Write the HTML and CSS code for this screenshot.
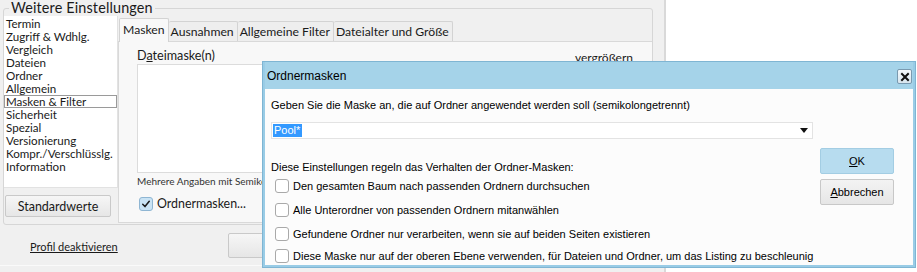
FILE: index.html
```html
<!DOCTYPE html>
<html lang="de">
<head>
<meta charset="utf-8">
<title>Ordnermasken</title>
<link rel="stylesheet" href="styles.css">
</head>
<body>
<div class="screen">
  <div class="window">
    <fieldset class="group">
      <legend class="group-title">Weitere Einstellungen</legend>
      <div class="group-body">
        <div class="side">
          <ul class="cat-list">
            <li>Termin</li>
            <li>Zugriff &amp; Wdhlg.</li>
            <li>Vergleich</li>
            <li>Dateien</li>
            <li>Ordner</li>
            <li>Allgemein</li>
            <li class="selected">Masken &amp; Filter</li>
            <li>Sicherheit</li>
            <li>Spezial</li>
            <li>Versionierung</li>
            <li>Kompr./Verschlüsslg.</li>
            <li>Information</li>
          </ul>
          <button class="btn btn-std" type="button">Standardwerte</button>
        </div>
        <div class="tabs">
          <div class="tab-strip">
            <span class="tab active">Masken</span>
            <span class="tab">Ausnahmen</span>
            <span class="tab">Allgemeine Filter</span>
            <span class="tab">Dateialter und Größe</span>
          </div>
          <div class="tab-pane">
            <div class="pane-head">
              <span>D<u>a</u>teimaske(n)</span>
              <span class="link-like">vergrößern</span>
            </div>
            <div class="textarea"></div>
            <div class="hint">Mehrere Angaben mit Semikolon trennen</div>
            <label class="check-main"><span class="cb checked"><svg viewBox="0 0 14 14" width="14" height="14"><path d="M3.2 7.3 L5.8 10 L10.8 3.8" fill="none" stroke="#1b1b1b" stroke-width="1.8" stroke-linecap="round" stroke-linejoin="round"/></svg></span>Ordnermasken...</label>
          </div>
        </div>
      </div>
    </fieldset>
    <div class="footer">
      <span class="footer-link">Profil deaktivieren</span>
      <button class="btn btn-footer" type="button">OK</button>
    </div>
  </div>
  <div class="desk"></div>

  <div class="dialog">
    <div class="dlg-title">
      <span>Ordnermasken</span>
      <span class="dlg-close"><svg viewBox="0 0 10 10" width="10" height="10"><path d="M2 2 L8 8 M8 2 L2 8" stroke="#111" stroke-width="2" stroke-linecap="square"/></svg></span>
    </div>
    <div class="dlg-body">
      <div class="prompt">Geben Sie die Maske an, die auf Ordner angewendet werden soll (semikolongetrennt)</div>
      <div class="combo">
        <span class="combo-sel">Pool*</span>
        <span class="combo-arrow"><svg viewBox="0 0 8 5" width="8" height="5"><path d="M0 0 H8 L4 5 Z" fill="#111"/></svg></span>
      </div>
      <div class="dlg-main">
        <div class="dlg-opts">
          <div class="opts-title">Diese Einstellungen regeln das Verhalten der Ordner-Masken:</div>
          <label class="opt"><span class="cb"></span>Den gesamten Baum nach passenden Ordnern durchsuchen</label>
          <label class="opt"><span class="cb"></span>Alle Unterordner von passenden Ordnern mitanwählen</label>
          <label class="opt"><span class="cb"></span>Gefundene Ordner nur verarbeiten, wenn sie auf beiden Seiten existieren</label>
          <label class="opt last"><span class="cb"></span>Diese Maske nur auf der oberen Ebene verwenden, für Dateien und Ordner, um das Listing zu beschleunig</label>
        </div>
        <div class="dlg-buttons">
          <button class="dbtn dbtn-ok" type="button"><u>O</u>K</button>
          <button class="dbtn" type="button"><u>A</u>bbrechen</button>
        </div>
      </div>
    </div>
  </div>
</div>
</body>
</html>
```

FILE: styles.css
```css
* { box-sizing: border-box; }
html, body { margin: 0; padding: 0; }
body {
  width: 917px;
  height: 272px;
  overflow: hidden;
  background: #ffffff;
  font-family: "Lato", "Noto Sans", sans-serif;
  color: #1a1a1a;
}
.screen {
  position: relative;
  display: flex;
  width: 917px;
  height: 272px;
}
.window {
  width: 666px;
  height: 272px;
  background: #f0f0f0;
  border-right: 2px solid #d9d9d9;
  display: flex;
  flex-direction: column;
}
.desk { flex: 1; background: #fff; }

/* group box */
.group {
  margin: 0 0 0 3px;
  padding: 0;
  width: 650px;
  height: 225px;
  min-width: 0;
  border: 1px solid #d6d6d6;
  border-radius: 3px;
}
.group-title {
  font-size: 14.4px;
  line-height: 16px;
  padding: 0 2px;
  margin-left: 5px;
  color: #1a1a1a;
  letter-spacing: 0.15px;
}
.group-body {
  display: flex;
  height: 208px;
}
.side {
  width: 114px;
  display: flex;
  flex-direction: column;
}
.cat-list {
  list-style: none;
  margin: 0;
  padding: 1px 0 0 0;
  height: 172px;
  background: #fff;
  border-right: 1px solid #e2e2e2;
  border-bottom: 1px solid #e2e2e2;
  font-size: 11.6px;
}
.cat-list li {
  height: 13px;
  line-height: 13px;
  padding-left: 2px;
  white-space: nowrap;
}
.cat-list li.selected {
  border: 1px solid #9a9a9a;
  padding-left: 1px;
  line-height: 11px;
}
.btn {
  font-family: "Lato", "Noto Sans", sans-serif;
  font-size: 12.5px;
  color: #1a1a1a;
  background: linear-gradient(#f6f6f6, #e6e6e6);
  border: 1px solid #c9c9c9;
  border-radius: 2px;
  padding: 0;
}
.btn-std {
  margin: 7px 0 0 1px;
  width: 106px;
  height: 22px;
}

/* tabs */
.tabs {
  flex: 1;
  display: flex;
  flex-direction: column;
  padding-top: 2px;
}
.tab-strip {
  display: flex;
  align-items: flex-end;
  height: 23px;
  padding-left: 1px;
  position: relative;
  z-index: 1;
}
.tab {
  font-size: 12.2px;
  height: 20px;
  line-height: 19px;
  padding: 0 3px 0 2px;
  border: 1px solid #d3d3d3;
  border-bottom: none;
  border-left: none;
  border-radius: 2px 2px 0 0;
  background: #eeeeee;
  white-space: nowrap;
}
.tab.active {
  height: 24px;
  margin-bottom: -1px;
  background: #f8f8f8;
  border-left: 1px solid #d3d3d3;
  line-height: 22px;
  padding: 0 3px 0 3px;
}
.tab-pane {
  flex: 1;
  margin-bottom: 1px;
  background: #f8f8f8;
  border: 1px solid #d9d9d9;
  border-right: none;
  padding: 6px 19px 0 18px;
  display: flex;
  flex-direction: column;
}
.pane-head {
  display: flex;
  justify-content: space-between;
  font-size: 12.6px;
  line-height: 16px;
  height: 16px;
}
.link-like { font-size: 12px; margin-top: 2px; }
.textarea {
  height: 109px;
  background: #fff;
  border: 1px solid #dcdcdc;
}
.hint {
  margin-top: 2px;
  font-size: 10px;
  line-height: 13px;
  color: #333;
  white-space: nowrap;
}
.check-main {
  display: flex;
  align-items: center;
  margin-top: 8px;
  margin-left: 2px;
  font-size: 12.4px;
  color: #1a1a1a;
}
.cb {
  display: inline-flex;
  align-items: center;
  justify-content: center;
  width: 14px;
  height: 14px;
  border: 1px solid #a9a9a9;
  border-radius: 3px;
  background: #fff;
  flex: none;
}
.check-main .cb {
  width: 14px;
  height: 14px;
  margin-right: 4px;
  border-color: #8fb6d3;
  background: #c9e3f4;
}

/* footer */
.footer {
  flex: 1;
  display: flex;
  align-items: flex-start;
  padding-top: 8px;
  border-bottom: 1px solid #fafafa;
  margin-bottom: 6px;
}
.footer-link {
  width: 87px;
  margin: 7px 0 0 30px;
  font-size: 11px;
  text-decoration: underline;
  color: #1a1a1a;
  white-space: nowrap;
}
.btn-footer {
  margin-left: 111px;
  width: 90px;
  height: 25px;
}

/* dialog */
.dialog {
  position: absolute;
  left: 262px;
  top: 61px;
  width: 654px;
  height: 207px;
  background: #99cce6;
  border: 1px solid #7fb5d3;
  padding: 0 2px 2px 2px;
  display: flex;
  flex-direction: column;
  font-family: "Liberation Sans", "Arial", sans-serif;
  font-size: 11px;
  color: #000;
}
.dlg-title {
  flex: none;
  height: 27px;
  display: flex;
  align-items: center;
  justify-content: space-between;
  padding: 0 1px 0 2px;
  font-size: 12px;
  background: #a5d3e9;
}
.dlg-close {
  width: 15px;
  height: 15px;
  display: flex;
  align-items: center;
  justify-content: center;
  border: 1px solid #7a9ab0;
  border-radius: 2px;
  background: linear-gradient(#f4f8fb, #d8e6ef);
  margin-top: 2px;
}
.dlg-body {
  flex: 1;
  min-height: 0;
  background: #fcfcfc;
  padding: 10px 19px 0 6px;
  display: flex;
  flex-direction: column;
}
.prompt { flex: none; height: 13px; line-height: 13px; }
.combo {
  flex: none;
  margin-top: 10px;
  width: 542px;
  height: 17px;
  border: 1px solid #e3e3e3;
  background: #fff;
  display: flex;
  align-items: center;
  justify-content: space-between;
  padding: 0 4px 0 1px;
}
.combo-sel {
  background: #3399ff;
  color: #fff;
  line-height: 13px;
  padding: 0 2px 0 1px;
}
.combo-arrow { display: flex; }
.dlg-main {
  display: flex;
  flex: 1;
  margin-top: 9px;
}
.dlg-opts {
  width: 549px;
  overflow: hidden;
  padding-top: 13px;
}
.opts-title { line-height: 13px; margin-bottom: 4px; white-space: nowrap; }
.opt {
  display: flex;
  align-items: center;
  height: 15px;
  margin-bottom: 9px;
  white-space: nowrap;
  padding-left: 4px;
}
.opt.last { margin-top: -2px; margin-bottom: 0; }
.opt .cb { margin-right: 4px; }
.dlg-buttons {
  margin-left: auto;
  display: flex;
  flex-direction: column;
  gap: 5px;
}
.dbtn {
  width: 74px;
  height: 26px;
  font-family: "Liberation Sans", "Arial", sans-serif;
  font-size: 11px;
  color: #000;
  background: linear-gradient(#f3f3f3, #e6e6e6);
  border: 1px solid #c8c8c8;
  border-radius: 2px;
  padding: 0;
}
.dbtn-ok {
  background: #b7dcef;
  border-color: #a3cde3;
}
```
